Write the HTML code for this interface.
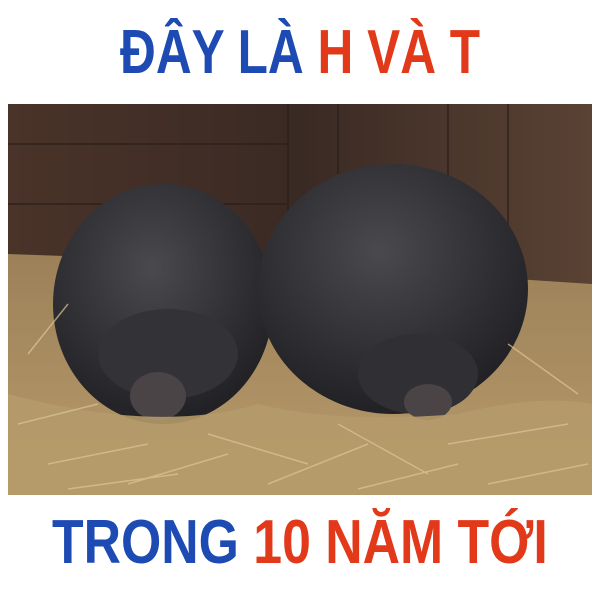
<!DOCTYPE html>
<html><head><style>
html,body{margin:0;padding:0;background:#fff;width:600px;height:600px;overflow:hidden;position:relative;font-family:"Liberation Sans",sans-serif;}
.t{position:absolute;left:0;width:600px;text-align:center;font-weight:bold;font-size:62px;line-height:62px;white-space:nowrap;}
.t span.w{display:inline-block;transform-origin:center;}
.b{color:#1d4bb3}.r{color:#e2391a}
</style></head><body>
<div class="t" style="top:22px"><span class="w" style="transform:scaleX(0.8)"><span class="b">ĐÂY LÀ </span><span class="r">H VÀ T</span></span></div>
<svg style="position:absolute;left:8px;top:104px" width="584" height="391" viewBox="0 0 584 391">
<defs>
<linearGradient id="wall" x1="0" y1="0" x2="1" y2="0"><stop offset="0" stop-color="#4a3329"/><stop offset="0.5" stop-color="#3a2a24"/><stop offset="1" stop-color="#5a4234"/></linearGradient>
<linearGradient id="straw" x1="0" y1="0" x2="0" y2="1"><stop offset="0" stop-color="#9c8058"/><stop offset="1" stop-color="#b89c6c"/></linearGradient>
<radialGradient id="pig" cx="0.45" cy="0.35" r="0.7"><stop offset="0" stop-color="#4a4a4e"/><stop offset="1" stop-color="#1e1e22"/></radialGradient>
</defs>
<rect width="584" height="391" fill="url(#wall)"/>
<g stroke="#2a1d18" stroke-width="2" opacity="0.6"><line x1="280" y1="0" x2="280" y2="180"/><line x1="330" y1="0" x2="330" y2="70"/><line x1="440" y1="0" x2="440" y2="180"/><line x1="500" y1="0" x2="500" y2="180"/><line x1="0" y1="40" x2="280" y2="40"/><line x1="0" y1="100" x2="280" y2="100"/></g>
<path d="M0 150 L280 160 L584 180 L584 391 L0 391 Z" fill="url(#straw)"/>
<ellipse cx="155" cy="200" rx="110" ry="120" fill="url(#pig)"/>
<ellipse cx="160" cy="250" rx="70" ry="45" fill="#333337"/>
<ellipse cx="150" cy="292" rx="28" ry="24" fill="#4a4446"/>
<ellipse cx="385" cy="185" rx="135" ry="125" fill="url(#pig)"/>
<ellipse cx="410" cy="270" rx="60" ry="40" fill="#303034"/>
<ellipse cx="420" cy="298" rx="24" ry="18" fill="#4a4446"/>
<path d="M0 290 Q150 330 250 300 Q330 320 450 310 Q530 290 584 300 L584 391 L0 391 Z" fill="#b59a6a" opacity="0.9"/>
<g stroke="#dcc696" stroke-width="1.5" opacity="0.7">
<line x1="10" y1="320" x2="90" y2="300"/><line x1="40" y1="360" x2="140" y2="340"/><line x1="120" y1="380" x2="220" y2="350"/><line x1="200" y1="330" x2="300" y2="360"/><line x1="260" y1="380" x2="360" y2="340"/><line x1="330" y1="320" x2="420" y2="370"/><line x1="440" y1="340" x2="560" y2="320"/><line x1="480" y1="380" x2="580" y2="360"/><line x1="20" y1="250" x2="60" y2="200"/><line x1="500" y1="240" x2="570" y2="290"/><line x1="60" y1="385" x2="170" y2="370"/><line x1="350" y1="385" x2="450" y2="360"/>
</g>
</svg>
<div class="t" style="top:512px"><span class="w" style="transform:scaleX(0.835)"><span class="b">TRONG </span><span class="r">10 NĂM TỚI</span></span></div>
</body></html>
